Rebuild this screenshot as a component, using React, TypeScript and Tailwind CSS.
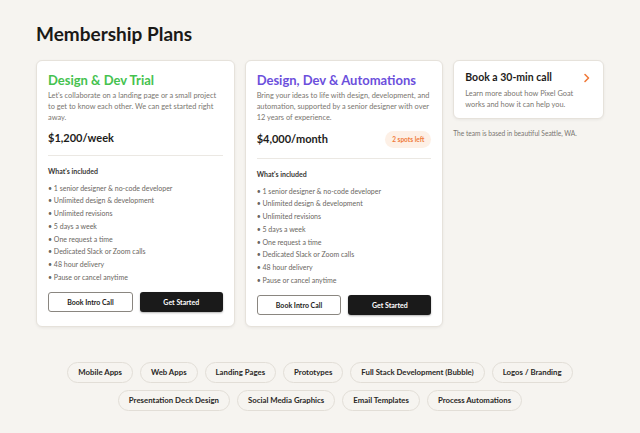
import React from "react";

const items = [
  "1 senior designer & no-code developer",
  "Unlimited design & development",
  "Unlimited revisions",
  "5 days a week",
  "One request a time",
  "Dedicated Slack or Zoom calls",
  "48 hour delivery",
  "Pause or cancel anytime",
];

const tags1 = ["Mobile Apps", "Web Apps", "Landing Pages", "Prototypes", "Full Stack Development (Bubble)", "Logos / Branding"];
const tags2 = ["Presentation Deck Design", "Social Media Graphics", "Email Templates", "Process Automations"];

function Card({
  title,
  titleColor,
  desc,
  price,
  badge,
}: {
  title: string;
  titleColor: string;
  desc: string;
  price: string;
  badge?: boolean;
}) {
  return (
    <div className="flex-1 bg-white border border-[#e6e2db] rounded-[6px] shadow-[0_1px_3px_rgba(0,0,0,0.06)] px-[11px] pt-[10px] pb-[11px] flex flex-col">
      <div className={`text-[13px] font-bold leading-[18px] ${titleColor}`}>{title}</div>
      <p className="mt-[1px] text-[7.4px] leading-[11px] text-[#7a7670]">{desc}</p>
      <div className={`mt-[6px] flex items-center justify-between ${badge ? "h-[21px]" : "h-[18px]"}`}>
        <span className="text-[11px] font-bold text-[#1d1c1a]">{price}</span>
        {badge && (
          <span className="rounded-full bg-[#fdf0e6] px-[7px] py-[4px] text-[6.5px] font-bold text-[#f07a3a]">2 spots left</span>
        )}
      </div>
      <div className="mt-[8px] h-px bg-[#ebe8e3]" />
      <div className="mt-[10px] text-[7px] font-bold text-[#3a3835]">What's included</div>
      <ul className="mt-[7px] flex flex-col gap-[3.8px]">
        {items.map((i) => (
          <li key={i} className="text-[7px] leading-[9px] text-[#6a6661]">
            • {i}
          </li>
        ))}
      </ul>
      <div className="mt-[10px] flex gap-[7px]">
        <button className="flex-1 h-[20px] rounded-[3px] border border-[#8a8680] bg-white text-[7px] font-bold text-[#1d1c1a]">
          Book Intro Call
        </button>
        <button className="flex-1 h-[20px] rounded-[3px] bg-[#1a1a1a] text-[7px] font-bold text-white shadow-[0_1px_2px_rgba(0,0,0,0.3)]">
          Get Started
        </button>
      </div>
    </div>
  );
}

function Tag({ t }: { t: string }) {
  return (
    <span className="h-[21px] flex items-center rounded-full border border-[#e2ded7] bg-[#f6f4f0] px-[10px] text-[7.8px] font-bold text-[#2a2826]">
      {t}
    </span>
  );
}

export default function App() {
  return (
    <div
      className="w-[640px] h-[433px] bg-[#f6f4f0] px-[36px] pt-[21px] overflow-hidden"
      style={{ fontFamily: "Lato, 'Noto Sans', sans-serif" }}
    >
      <h1 className="text-[19px] font-bold leading-[26px] text-[#1a1917]">Membership Plans</h1>
      <div className="mt-[13px] flex items-start gap-[10px]">
        <div className="w-[408px] flex gap-[10px]">
          <Card
            title="Design & Dev Trial"
            titleColor="text-[#45c24f]"
            desc="Let's collaborate on a landing page or a small project to get to know each other. We can get started right away."
            price="$1,200/week"
          />
          <Card
            title="Design, Dev & Automations"
            titleColor="text-[#6c4fdc]"
            desc="Bring your ideas to life with design, development, and automation, supported by a senior designer with over 12 years of experience."
            price="$4,000/month"
            badge
          />
        </div>
        <div className="w-[151px] flex flex-col">
          <div className="bg-white border border-[#e6e2db] rounded-[6px] shadow-[0_1px_3px_rgba(0,0,0,0.06)] px-[11px] pt-[9px] pb-[8px]">
            <div className="flex items-center justify-between">
              <span className="text-[10.5px] font-bold text-[#1d1c1a]">Book a 30-min call</span>
              <svg width="8" height="10" viewBox="0 0 8 10" className="mr-[1px]">
                <path d="M2 1.5 L5.5 5 L2 8.5" stroke="#f07a3a" strokeWidth="1.6" fill="none" strokeLinecap="round" strokeLinejoin="round" />
              </svg>
            </div>
            <p className="mt-[2px] pr-[6px] text-[7.4px] leading-[11px] text-[#7a7670]">
              Learn more about how Pixel Goat works and how it can help you.
            </p>
          </div>
          <p className="mt-[10px] text-[6.6px] text-[#7a7670]">The team is based in beautiful Seattle, WA.</p>
        </div>
      </div>
      <div className="mt-[35px] flex flex-col items-center gap-[7px]">
        <div className="flex gap-[7px]">
          {tags1.map((t) => (
            <Tag key={t} t={t} />
          ))}
        </div>
        <div className="flex gap-[7px]">
          {tags2.map((t) => (
            <Tag key={t} t={t} />
          ))}
        </div>
      </div>
    </div>
  );
}
